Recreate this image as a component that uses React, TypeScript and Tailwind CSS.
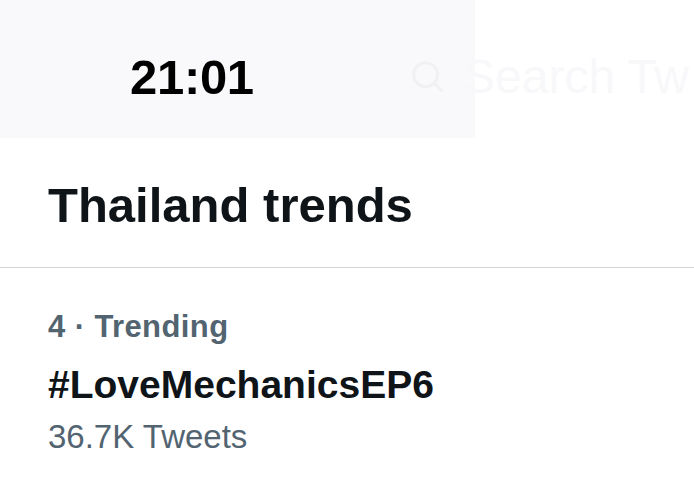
import React from 'react';

const font = { fontFamily: '"Liberation Sans", Arial, sans-serif' };

const App: React.FC = () => {
  return (
    <div className="w-[694px] h-[496px] bg-white overflow-hidden" style={font}>
      {/* status bar / search header, faded */}
      <div className="flex h-[138px]">
        <div className="w-[475px] shrink-0 bg-[#f9f9fb] flex items-center pl-[130px] pt-[16px]">
          <span className="text-[49px] font-bold leading-none tracking-[-0.3px] text-black">21:01</span>
        </div>
        <div className="-ml-[66px] flex items-center gap-4 pt-[16px] text-[#f8f8fa]">
          <svg width="38" height="38" viewBox="0 0 24 24" fill="none" stroke="#f1f1f4" strokeWidth="2">
            <circle cx="10.5" cy="10.5" r="7.5" />
            <path d="M16 16l5 5" />
          </svg>
          <span className="text-[48px] whitespace-nowrap leading-none">Search Tw</span>
        </div>
      </div>

      <div className="px-12 pt-[38px] pb-[33px]">
        <h1 className="text-[49px] font-bold leading-[58px] text-[#0f1419]">Thailand trends</h1>
      </div>
      <div className="h-px bg-[#d4d4d4]" />

      <div className="px-12 pt-[41px]">
        <div className="text-[31px] font-bold leading-[36px] text-[#536471] tracking-[0.4px]">4 · Trending</div>
        <div className="mt-[18px] text-[39px] font-bold leading-[44px] text-[#0f1419]">#LoveMechanicsEP6</div>
        <div className="mt-[12px] text-[33px] leading-[36px] text-[#536471]">36.7K Tweets</div>
      </div>
    </div>
  );
};

export default App;
